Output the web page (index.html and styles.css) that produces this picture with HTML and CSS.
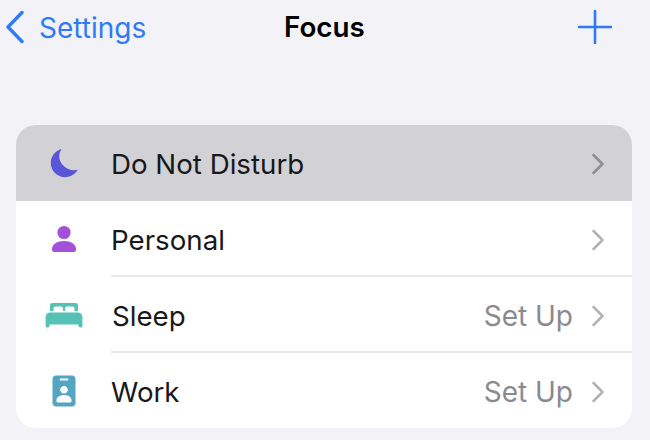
FILE: index.html
```html
<!DOCTYPE html>
<html lang="en">
<head>
<meta charset="utf-8">
<title>Focus</title>
<link rel="stylesheet" href="styles.css">
</head>
<body>
<div class="screen">
  <header class="nav">
    <div class="back">
      <svg class="back-icon" width="20" height="34" viewBox="0 0 20 34"><path d="M18 2.5 L4 17 L18 31.5" fill="none" stroke="#2f7bf6" stroke-width="3.4" stroke-linecap="round" stroke-linejoin="round"/></svg>
      <span class="back-label">Settings</span>
    </div>
    <h1 class="title">Focus</h1>
    <svg class="plus" width="34" height="34" viewBox="0 0 34 34"><path d="M17 1 V33 M1 17 H33" fill="none" stroke="#2f7bf6" stroke-width="2.6" stroke-linecap="round"/></svg>
  </header>
  <main class="list">
    <div class="row selected">
      <div class="icon">
        <svg width="30" height="30" viewBox="0 0 30 30"><path d="M12.6 1 C6.3 2.6 1.8 8.3 1.8 15 C1.8 23 8.2 29.2 16 29.2 C21.4 29.2 26.2 26.2 28.8 21.6 C27.8 22 26.4 22.3 24.8 22.2 C17.5 22 10.2 15.4 10.2 8.4 C10.2 5.8 11.1 3 12.6 1 Z" fill="#5856d6"/></svg>
      </div>
      <div class="content"><span class="label">Do Not Disturb</span><svg class="chev" width="14" height="22" viewBox="0 0 14 22"><path d="M2.5 2 L11.5 11 L2.5 20" fill="none" stroke="#8e8e93" stroke-width="2.6" stroke-linecap="round" stroke-linejoin="round"/></svg></div>
    </div>
    <div class="row">
      <div class="icon">
        <svg width="26" height="28" viewBox="0 0 26 28"><circle cx="13" cy="7.5" r="6.6" fill="#a550d8"/><path d="M1 24.5 C1 19 6 16 13 16 C20 16 25 19 25 24.5 C25 26 24.2 27 22.8 27 H3.2 C1.8 27 1 26 1 24.5 Z" fill="#a550d8"/></svg>
      </div>
      <div class="content line"><span class="label">Personal</span><svg class="chev light" width="14" height="22" viewBox="0 0 14 22"><path d="M2.5 2 L11.5 11 L2.5 20" fill="none" stroke="#b4b4b8" stroke-width="2.6" stroke-linecap="round" stroke-linejoin="round"/></svg></div>
    </div>
    <div class="row">
      <div class="icon">
        <svg width="38" height="26" viewBox="0 0 38 26"><path d="M5 9 V3.5 C5 2 6 1 7.5 1 H30.5 C32 1 33 2 33 3.5 V9 H29.5 V6.5 C29.5 5.3 28.7 4.6 27.5 4.6 H22 C20.8 4.6 20 5.3 20 6.5 V9 H18 V6.5 C18 5.3 17.2 4.6 16 4.6 H10.5 C9.3 4.6 8.5 5.3 8.5 6.5 V9 Z" fill="#56c2b5"/><path d="M5 10.5 H33 C35.5 10.5 37.4 12.4 37.4 15 V24 C37.4 25 36.8 25.4 36 25.4 H35 C34.2 25.4 33.8 25 33.6 24.2 L33.4 22.6 H4.6 L4.4 24.2 C4.2 25 3.8 25.4 3 25.4 H2 C1.2 25.4 .6 25 .6 24 V15 C.6 12.4 2.5 10.5 5 10.5 Z" fill="#56c2b5"/></svg>
      </div>
      <div class="content line sleep"><span class="label">Sleep</span><span class="value">Set Up</span><svg class="chev light" width="14" height="22" viewBox="0 0 14 22"><path d="M2.5 2 L11.5 11 L2.5 20" fill="none" stroke="#b4b4b8" stroke-width="2.6" stroke-linecap="round" stroke-linejoin="round"/></svg></div>
    </div>
    <div class="row last">
      <div class="icon">
        <svg width="24" height="32" viewBox="0 0 24 32"><path fill-rule="evenodd" d="M4 .5 H20 C22 .5 23.5 2 23.5 4 V28 C23.5 30 22 31.5 20 31.5 H4 C2 31.5 .5 30 .5 28 V4 C.5 2 2 .5 4 .5 Z M8.5 3.6 C8 3.6 7.6 4 7.6 4.5 C7.6 5 8 5.4 8.5 5.4 H15.5 C16 5.4 16.4 5 16.4 4.5 C16.4 4 16 3.6 15.5 3.6 Z M12 11 C9.8 11 8.2 12.8 8.2 14.8 C8.2 16.8 9.8 18.6 12 18.6 C14.2 18.6 15.8 16.8 15.8 14.8 C15.8 12.8 14.2 11 12 11 Z M12 20 C7.8 20 4.4 22.2 4.4 25.4 C4.4 26.8 5.2 27.6 6.6 27.6 H17.4 C18.8 27.6 19.6 26.8 19.6 25.4 C19.6 22.2 16.2 20 12 20 Z" fill="#53a5c1"/></svg>
      </div>
      <div class="content"><span class="label">Work</span><span class="value">Set Up</span><svg class="chev light" width="14" height="22" viewBox="0 0 14 22"><path d="M2.5 2 L11.5 11 L2.5 20" fill="none" stroke="#b4b4b8" stroke-width="2.6" stroke-linecap="round" stroke-linejoin="round"/></svg></div>
    </div>
  </main>
</div>
</body>
</html>
```
FILE: styles.css
```css
* { box-sizing: border-box; margin: 0; padding: 0; }
html, body { width: 650px; height: 440px; overflow: hidden; }
body { background: #f2f2f7; font-family: Inter, "Liberation Sans", sans-serif; color: #18181a; }
.screen { display: flex; flex-direction: column; padding: 10px 18px 0 4px; }
.nav { display: flex; align-items: center; justify-content: space-between; height: 34px; position: relative; }
.back { display: flex; align-items: center; gap: 15px; color: #2f7bf6; font-size: 28px; }
.back-label { padding-top: 2px; }
.title { position: absolute; left: 280px; font-size: 27.8px; font-weight: 600; color: #000; }
.plus { margin-right: 20px; }
.list { margin: 81px 0 0 12px; width: 616px; background: #fff; border-radius: 20px; overflow: hidden; }
.row { display: flex; align-items: stretch; height: 76px; }
.last { height: 75px; }
.selected { background: #d1d1d6; }
.icon { width: 95px; display: flex; align-items: center; justify-content: center; }
.content { flex: 1; display: flex; align-items: center; padding: 2px 27px 0 0; }
.line { border-bottom: 2px solid #e9e9ec; padding-top: 4px; }
.sleep .label { margin-left: 1px; }
.label { flex: 1; font-size: 27.7px; }
.value { font-size: 28px; color: #8a8a8e; margin-right: 18px; }
```
